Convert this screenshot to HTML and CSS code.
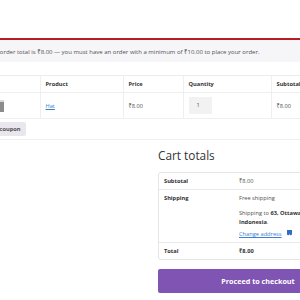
FILE: index.html
```html
<!DOCTYPE html>
<html lang="en">
<head>
  <meta charset="UTF-8">
  <meta name="viewport" content="width=device-width, initial-scale=1.0">
  <title>Cart</title>
  <link rel="stylesheet" href="styles.css">
</head>
<body>
  <main class="page">
    <div class="notice">Your current order total is ₹8.00 — you must have an order with a minimum of ₹10.00 to place your order.</div>

    <table class="cart-table">
      <colgroup>
        <col class="col-remove">
        <col class="col-thumb">
        <col class="col-name">
        <col class="col-price">
        <col class="col-qty">
        <col class="col-sub">
      </colgroup>
      <thead>
        <tr>
          <th class="no-line"></th>
          <th class="no-line"></th>
          <th>Product</th>
          <th>Price</th>
          <th>Quantity</th>
          <th>Subtotal</th>
        </tr>
      </thead>
      <tbody>
        <tr class="item">
          <td class="no-line"><span class="remove">×</span></td>
          <td class="no-line"><span class="thumb"></span></td>
          <td><a href="#">Hat</a></td>
          <td>₹8.00</td>
          <td><span class="qty">1</span></td>
          <td>₹8.00</td>
        </tr>
        <tr class="actions">
          <td colspan="6">
            <div class="coupon">
              <span class="coupon-input"></span>
              <button class="btn-grey">Apply coupon</button>
            </div>
          </td>
        </tr>
      </tbody>
    </table>

    <div class="collaterals">
      <div class="cart-totals">
        <h2>Cart totals</h2>
        <table class="totals-table">
          <tr>
            <th>Subtotal</th>
            <td>₹8.00</td>
          </tr>
          <tr>
            <th>Shipping</th>
            <td>
              <div class="ship-method">Free shipping</div>
              <p class="ship-dest">Shipping to <b>63, Ottawa, Indonesia</b>.</p>
              <a class="change-addr" href="#">Change address</a>
              <svg class="truck" width="7" height="7" viewBox="0 0 7 7"><path d="M0 0h6v4.5l-1.2 1L3.5 4.3 2.2 5.5 1 4.5V0z" fill="#2f6fc0"/></svg>
            </td>
          </tr>
          <tr>
            <th>Total</th>
            <td><b>₹8.00</b></td>
          </tr>
        </table>
        <button class="checkout">Proceed to checkout</button>
      </div>
    </div>
  </main>
</body>
</html>
```

FILE: styles.css
```css
html, body {
  margin: 0;
  padding: 0;
  overflow: hidden;
  background: #fff;
}

body {
  font-family: "Open Sans", "Noto Sans", sans-serif;
  font-size: 5.7px;
  line-height: 8px;
  color: #515151;
}

.page {
  width: 416px;
  margin-left: -58px;
  padding-top: 38px;
}

.notice {
  background-color: #f6f5f8;
  border-top: 2px solid #b81c23;
  padding: 8px 0 6px 21px;
  margin-bottom: 13px;
  font-size: 6px;
  white-space: nowrap;
}

.cart-table {
  width: 416px;
  border-collapse: collapse;
  table-layout: fixed;
  border-top: 1px solid #ebebeb;
  border-bottom: 1px solid #ebebeb;
}

.col-remove { width: 28px; }
.col-thumb { width: 70px; }
.col-name { width: 83px; }
.col-price { width: 60px; }
.col-qty { width: 88px; }
.col-sub { width: 87px; }

.cart-table th,
.cart-table td {
  text-align: left;
  padding: 4px 5px;
  border-left: 1px solid #efefef;
  border-bottom: 1px solid #efefef;
  vertical-align: middle;
  white-space: nowrap;
}

.cart-table th {
  font-weight: bold;
  color: #333;
}

.cart-table .no-line {
  border-left: none;
}

.item td {
  height: 17px;
}

.remove {
  color: #c33;
  font-size: 9px;
}

.thumb {
  display: block;
  width: 32px;
  height: 12px;
  margin-left: -3px;
  background: linear-gradient(#d8d8d8 0 2px, #8c8c8c 2px);
}

.item a,
.change-addr {
  color: #3a7fd0;
  text-decoration: underline;
}

.qty {
  display: block;
  width: 15px;
  height: 17px;
  line-height: 17px;
  padding-left: 8px;
  background: #f2f2f2;
}

.actions td {
  padding: 3px 0 3px 5px;
  border-left: none;
}

.coupon {
  display: flex;
  align-items: center;
  gap: 4px;
}

.coupon-input {
  display: block;
  width: 26px;
  height: 14px;
}

.btn-grey {
  font-family: inherit;
  font-size: 5.7px;
  font-weight: bold;
  color: #515151;
  background: #e9e6ed;
  border: none;
  border-radius: 2px;
  height: 14px;
  padding: 0 5px;
}

.collaterals {
  display: flex;
  justify-content: flex-end;
}

.cart-totals {
  width: 200px;
}

.cart-totals h2 {
  font-size: 11.8px;
  font-weight: normal;
  color: #333;
  line-height: 16px;
  margin: 7px 0 9px;
}

.totals-table {
  width: 100%;
  border-collapse: separate;
  border-spacing: 0;
  border: 1px solid #e6e6e6;
  border-radius: 3px;
}

.totals-table th,
.totals-table td {
  text-align: left;
  vertical-align: top;
  padding: 4px 5px;
  border-top: 1px solid #eaeaea;
}

.totals-table tr:first-child th,
.totals-table tr:first-child td {
  border-top: none;
}

.totals-table th {
  width: 65px;
  font-weight: bold;
  color: #333;
}

.totals-table b {
  color: #333;
}

.ship-dest {
  max-width: 72px;
  margin: 7px 0 3px;
  line-height: 9px;
}

.truck {
  margin-left: 3px;
  vertical-align: -1px;
}

.checkout {
  display: block;
  width: 100%;
  height: 24px;
  margin-top: 9px;
  border: none;
  border-radius: 2px;
  background: #7f54b3;
  color: #fff;
  font-family: inherit;
  font-size: 7.2px;
  font-weight: bold;
}
```
